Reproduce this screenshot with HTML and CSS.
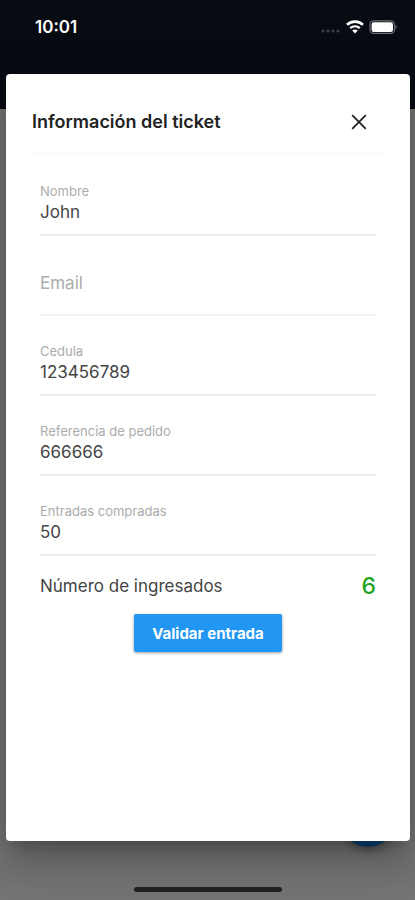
FILE: index.html
```html
<!DOCTYPE html>
<html lang="es">
<head>
  <meta charset="UTF-8" />
  <meta name="viewport" content="width=device-width, initial-scale=1.0" />
  <title>Información del ticket</title>
  <link rel="stylesheet" href="styles.css">
</head>
<body>
  <!-- Barra superior -->
  <header class="app-bar">
    <span class="clock">10:01</span>
    <div class="status-icons">
      <svg width="20" height="14" viewBox="0 0 20 14" fill="#3f4148">
        <circle cx="2" cy="11" r="1.5" />
        <circle cx="7" cy="11" r="1.5" />
        <circle cx="12" cy="11" r="1.5" />
        <circle cx="17" cy="11" r="1.5" />
      </svg>
      <svg width="18" height="14" viewBox="0 0 18 14" fill="none" stroke="#fff" stroke-width="2.6">
        <path d="M1 4.8C5.6 .6 12.4 .6 17 4.8" />
        <path d="M4.2 8.2C7 5.7 11 5.7 13.8 8.2" stroke-width="2.4" />
        <path d="M9 13.6L6.2 10.6C7.8 9.2 10.2 9.2 11.8 10.6Z" fill="#fff" stroke="none" />
      </svg>
      <svg width="28" height="14" viewBox="0 0 28 14">
        <rect x="1" y=".8" width="24.5" height="12.6" rx="3.6" fill="none" stroke="#6d6e73" stroke-width="1.2" />
        <rect x="2.6" y="2.2" width="21.4" height="9.8" rx="2.2" fill="#fff" />
        <path d="M26.6 5C28 5.6 28 8.6 26.6 9.2Z" fill="#85868a" />
      </svg>
    </div>
  </header>

  <div class="fab"></div>
  <div class="home-indicator"></div>

  <!-- Dialogo -->
  <main class="dialog" role="dialog" aria-labelledby="dialogTitle">
    <div class="dialog-header">
      <h1 id="dialogTitle">Información del ticket</h1>
      <button class="close-button" type="button" aria-label="Cerrar">
        <svg width="16" height="16" viewBox="0 0 16 16" fill="none" stroke="#222" stroke-width="1.8">
          <path d="M1.2 1.2L14.8 14.8M14.8 1.2L1.2 14.8" />
        </svg>
      </button>
    </div>

    <form class="ticket-form">
      <div class="field">
        <label for="nombre">Nombre</label>
        <input id="nombre" type="text" value="John" />
      </div>
      <div class="field field-empty">
        <label for="email">Email</label>
        <input id="email" type="email" />
      </div>
      <div class="field">
        <label for="cedula">Cedula</label>
        <input id="cedula" type="text" value="123456789" />
      </div>
      <div class="field">
        <label for="referencia">Referencia de pedido</label>
        <input id="referencia" type="text" value="666666" />
      </div>
      <div class="field">
        <label for="entradas">Entradas compradas</label>
        <input id="entradas" type="text" value="50" />
      </div>

      <div class="entered">
        <span>Número de ingresados</span>
        <strong class="entered-count">6</strong>
      </div>

      <button class="submit-button" type="button">Validar entrada</button>
    </form>
  </main>
</body>
</html>
```

FILE: styles.css
```css
* {
  box-sizing: border-box;
}

body {
  margin: 0;
  min-height: 100vh;
  position: relative;
  background-color: #757575;
  font-family: Inter, "Liberation Sans", sans-serif;
  font-size: 17px;
  color: #444;
}

.app-bar {
  display: flex;
  justify-content: space-between;
  align-items: flex-start;
  height: 109px;
  padding: 16px 18px 0 35px;
  background-color: #090b13;
}

.clock {
  color: #fff;
  font-weight: 600;
  line-height: 22px;
}

.status-icons {
  display: flex;
  align-items: center;
  gap: 5px;
  height: 22px;
}

.dialog {
  position: absolute;
  top: 74px;
  right: 5px;
  bottom: 59px;
  left: 6px;
  padding: 16px 26px;
  background-color: #fff;
  border-radius: 4px;
  box-shadow: 0 12px 16px -7px rgba(0, 0, 0, 0.2), 0 24px 38px 3px rgba(0, 0, 0, 0.14), 0 9px 46px 8px rgba(0, 0, 0, 0.12);
}

.dialog-header {
  display: flex;
  justify-content: space-between;
  align-items: center;
  height: 64px;
  padding-right: 9px;
  margin-bottom: 2px;
  border-bottom: 1px solid #f9f9f9;
}

.dialog-header h1 {
  margin: 0;
  font-size: 18px;
  font-weight: 600;
  color: #222;
}

.close-button {
  display: flex;
  padding: 8px;
  border: none;
  background: none;
  cursor: pointer;
}

.ticket-form {
  display: flex;
  flex-direction: column;
  padding: 0 8px;
}

.field {
  position: relative;
  display: flex;
  flex-direction: column;
  padding: 26px 0 10px;
  border-bottom: 2px solid #ececec;
}

.field label {
  font-size: 13px;
  line-height: 18px;
  color: #acacac;
}

.field input {
  width: 100%;
  height: 24px;
  padding: 0;
  border: none;
  outline: none;
  background: none;
  font: inherit;
  color: #444;
}

.field-empty {
  padding-top: 44px;
  border-bottom-color: #f3f3f3;
}

/* sin valor la etiqueta ocupa el lugar del texto */
.field-empty label {
  position: absolute;
  top: 35px;
  left: 0;
  font-size: 17px;
  line-height: 24px;
}

.entered {
  display: flex;
  justify-content: space-between;
  align-items: center;
  height: 28px;
  margin: 16px 0 14px;
}

.entered-count {
  font-size: 23px;
  font-weight: 500;
  color: #1fa51f;
}

.submit-button {
  align-self: center;
  height: 38px;
  padding: 0 18px;
  border: none;
  border-radius: 2px;
  background-color: #2196f3;
  box-shadow: 0 1px 3px rgba(0, 0, 0, 0.4);
  color: #fff;
  font: inherit;
  font-size: 15px;
  font-weight: 700;
  cursor: pointer;
}

.fab {
  position: absolute;
  right: 20px;
  bottom: 53px;
  width: 54px;
  height: 54px;
  border-radius: 50%;
  background-color: #0a4278;
  box-shadow: 0 4px 8px rgba(0, 0, 0, 0.3);
}

.home-indicator {
  position: absolute;
  bottom: 8px;
  left: 50%;
  width: 148px;
  height: 5px;
  border-radius: 3px;
  background-color: #202020;
  transform: translateX(-50%);
  z-index: 1;
}
```
